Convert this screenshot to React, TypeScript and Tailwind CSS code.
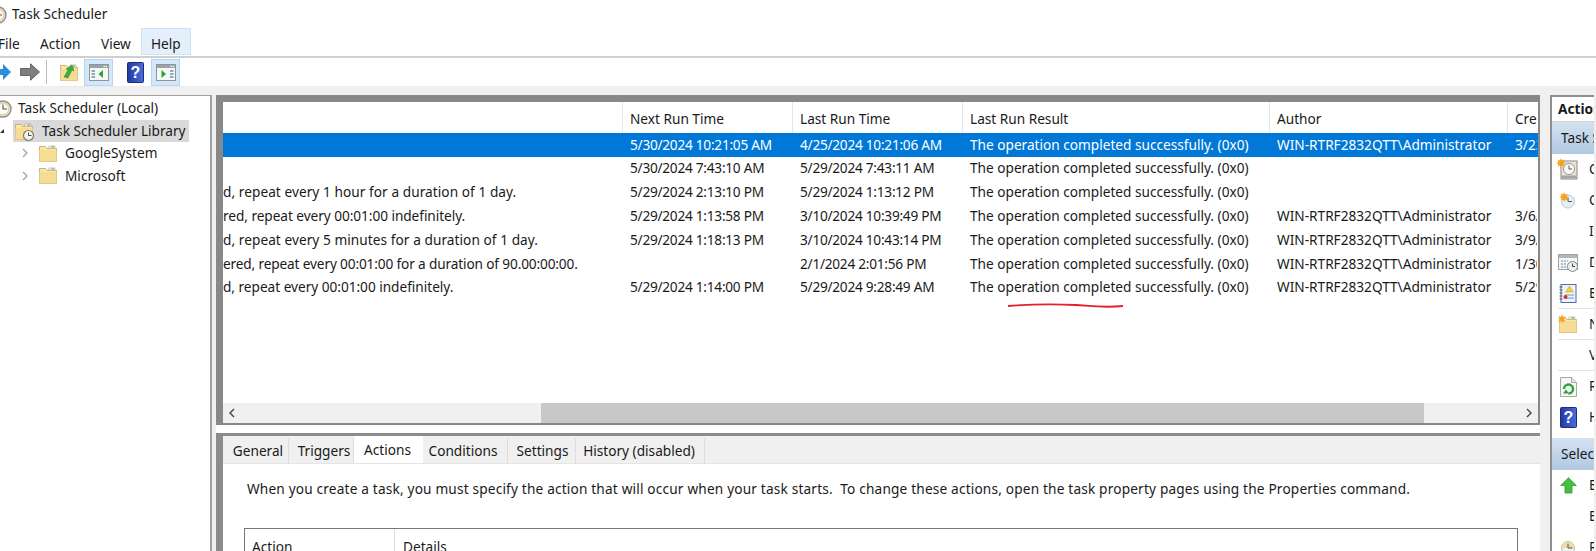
import type { ReactNode } from "react";

const font = { fontFamily: '"Noto Sans", sans-serif' };

function ClockIcon({ size = 18 }: { size?: number }) {
  return (
    <svg width={size} height={size} viewBox="0 0 18 18" className="shrink-0">
      <circle cx="9" cy="9" r="8" fill="#e6dcc4" stroke="#8f8f84" strokeWidth="1.4" />
      <circle cx="9" cy="9" r="5.6" fill="#fbfbf4" stroke="#c9c2a8" strokeWidth=".6" />
      <path d="M9 4.6V9h4" fill="none" stroke="#55554f" strokeWidth="1.1" />
    </svg>
  );
}

function Folder({ clock = false, star = false, arrow = false, w = 18, h = 17 }: { clock?: boolean; star?: boolean; arrow?: boolean; w?: number; h?: number }) {
  return (
    <svg width={w} height={h} viewBox="0 0 18 17" className="shrink-0" style={{ overflow: "visible" }}>
      <path d="M.5 1.5h6l1.5 2h9.5v13H.5z" fill="#f9e6a9" stroke="#c9ad6a" strokeWidth=".9" />
      <path d="M.5 5h17v11.5H.5z" fill="#f6dd96" />
      <rect x="10" y="1" width="6" height="2.6" fill="#fdf8e4" stroke="#b9a46a" strokeWidth=".6" />
      <rect x="12.5" y="1.4" width="2.4" height="1.4" fill="#6fa4d6" />
      {star && <path d="M3 -2l1 3 3-1-2 3 2 3-3-1-1 3-1-3-3 1 2-3-2-3 3 1z" fill="#f5a31e" />}
      {arrow && <path d="M4 13l4-7-2-1 6-4 2 6-2-1-4 8z" fill="#3cae3c" stroke="#2c8c2c" strokeWidth=".5" />}
      {clock && (
        <g>
          <circle cx="13.5" cy="12.5" r="5" fill="#f4f4ee" stroke="#7d7d76" strokeWidth="1.2" />
          <path d="M13.5 9.5v3h3" fill="none" stroke="#33332f" strokeWidth=".9" />
        </g>
      )}
    </svg>
  );
}

function HelpBook() {
  return (
    <svg width="17" height="21" viewBox="0 0 17 21" className="shrink-0">
      <defs>
        <linearGradient id="hb" x1="0" x2="1" y1="0" y2="0">
          <stop offset="0" stopColor="#2438a0" />
          <stop offset="1" stopColor="#4a6ce0" />
        </linearGradient>
      </defs>
      <rect x=".5" y=".5" width="16" height="20" rx="1" fill="url(#hb)" stroke="#1d2c7a" />
      <text x="8.5" y="16" textAnchor="middle" fontSize="16" fontWeight="700" fill="#fff" fontFamily="Liberation Sans">?</text>
    </svg>
  );
}

function Pane({ right }: { right?: boolean }) {
  return (
    <svg width="20" height="17" viewBox="0 0 20 17" className="shrink-0">
      <rect x=".5" y=".5" width="19" height="16" fill="#f6f8f8" stroke="#8b9698" />
      <rect x="1" y="1" width="18" height="3" fill="#9aa4a6" />
      <rect x="14.5" y="1.8" width="1.3" height="1.3" fill="#fff" />
      <rect x="16.7" y="1.8" width="1.3" height="1.3" fill="#fff" />
      <path d={right ? "M14 7h3.5M14 10h3.5M14 13h3.5" : "M2.5 7H6M2.5 10H6M2.5 13H6"} stroke="#6d8fb0" strokeWidth="1.6" />
      {right ? <path d="M5.5 6l4.5 4-4.5 4z" fill="#2aa52a" /> : <path d="M14 6l-4.5 4 4.5 4z" fill="#2aa52a" />}
    </svg>
  );
}

function CreateBasic() {
  return (
    <svg width="19" height="19" viewBox="0 0 19 19" style={{ overflow: "visible" }}>
      <rect x="2" y="1" width="16" height="18" fill="#e9e2d6" stroke="#8f8a82" />
      <rect x="2.5" y="15.5" width="15" height="3" fill="#a9a49c" />
      <circle cx="10" cy="9" r="5.5" fill="#fbfbf6" stroke="#8f9aa0" />
      <path d="M10 5.5V9h3" fill="none" stroke="#555" />
      <path d="M2 -2l1 2.5 2.5-1-1 2.5 2.5 1-2.5 1 1 2.5-2.5-1-1 2.5-1-2.5-2.5 1 1-2.5-2.5-1 2.5-1-1-2.5 2.5 1z" fill="#f5a31e" />
    </svg>
  );
}

function CreateTask() {
  return (
    <svg width="16" height="17" viewBox="0 0 16 17" style={{ overflow: "visible" }}>
      <circle cx="8" cy="9.5" r="6.5" fill="#e9eef2" stroke="#b6c6d4" />
      <path d="M8 5.5v4h4" fill="none" stroke="#555" />
      <path d="M4 0l1 2.5 2.5-1-1 2.5 2.5 1-2.5 1 1 2.5-2.5-1-1 2.5-1-2.5-2.5 1 1-2.5-2.5-1 2.5-1-1-2.5 2.5 1z" fill="#f5a31e" />
    </svg>
  );
}

function RunClock() {
  return (
    <svg width="16" height="16" viewBox="0 0 16 16">
      <circle cx="8" cy="8" r="6.5" fill="#eef1f3" stroke="#aebcc8" />
      <path d="M1.5 8a6.5 6.5 0 0 1 13 0z" fill="#f0dca0" />
      <path d="M8 3.5V8h4.5" fill="none" stroke="#555" />
    </svg>
  );
}

function Display() {
  return (
    <svg width="20" height="18" viewBox="0 0 20 18">
      <rect x=".5" y=".5" width="19" height="15" fill="#f4f6f8" stroke="#9aa4ac" />
      <rect x="1" y="1" width="18" height="3" fill="#aeb8c0" />
      <path d="M3 7h7M3 10h6M3 13h5" stroke="#9ab0c4" strokeWidth="1.4" strokeDasharray="2 1" />
      <circle cx="14.5" cy="12.5" r="5" fill="#eeeeea" stroke="#7d8a90" />
      <path d="M14.5 9.5v3h2.5" fill="none" stroke="#444" />
    </svg>
  );
}

function Notebook() {
  return (
    <svg width="18" height="19" viewBox="0 0 18 19">
      <rect x="2" y=".5" width="15" height="18" fill="#eef3fb" stroke="#4a6ea8" />
      <path d="M.5 3h3M.5 6h3M.5 9h3M.5 12h3M.5 15h3" stroke="#555" strokeWidth="1.1" />
      <path d="M10.5 2l4 6h-8z" fill="#f5cf3a" stroke="#c99f1e" strokeWidth=".5" />
      <path d="M6 11h9M6 14h9" stroke="#7a93bb" />
      <circle cx="6.5" cy="13" r="2" fill="#d0342c" />
    </svg>
  );
}

function Refresh() {
  return (
    <svg width="17" height="20" viewBox="0 0 17 20">
      <path d="M.5.5h11l5 5v14H.5z" fill="#f6f7f4" stroke="#a7aaa4" />
      <path d="M11.5.5v5h5" fill="#e4e6e0" stroke="#a7aaa4" />
      <path d="M4 12a4.5 4.5 0 1 1 4.5 4.5" fill="none" stroke="#2fa33a" strokeWidth="2.4" />
      <path d="M3 16.5h6l-3-4z" fill="#2fa33a" />
    </svg>
  );
}

function UpArrow() {
  return (
    <svg width="17" height="17" viewBox="0 0 17 17">
      <path d="M8.5 .8L16.3 8.5H12V16H5V8.5H.7z" fill="#43c043" stroke="#2a9a2a" strokeWidth=".8" />
    </svg>
  );
}

const rows = [
  ["", "5/30/2024 10:21:05 AM", "4/25/2024 10:21:06 AM", "WIN-RTRF2832QTT\\Administrator", "3/23/2024"],
  ["", "5/30/2024 7:43:10 AM", "5/29/2024 7:43:11 AM", "", ""],
  ["d, repeat every 1 hour for a duration of 1 day.", "5/29/2024 2:13:10 PM", "5/29/2024 1:13:12 PM", "", ""],
  ["red, repeat every 00:01:00 indefinitely.", "5/29/2024 1:13:58 PM", "3/10/2024 10:39:49 PM", "WIN-RTRF2832QTT\\Administrator", "3/6/2024"],
  ["d, repeat every 5 minutes for a duration of 1 day.", "5/29/2024 1:18:13 PM", "3/10/2024 10:43:14 PM", "WIN-RTRF2832QTT\\Administrator", "3/9/2024"],
  ["ered, repeat every 00:01:00 for a duration of 90.00:00:00.", "", "2/1/2024 2:01:56 PM", "WIN-RTRF2832QTT\\Administrator", "1/30/2024"],
  ["d, repeat every 00:01:00 indefinitely.", "5/29/2024 1:14:00 PM", "5/29/2024 9:28:49 AM", "WIN-RTRF2832QTT\\Administrator", "5/29/2024"],
];

const colW = [399, 170, 170, 307, 238, 30];
const firstTrack = ["", "", "tracking-[0.06px]", "tracking-[-0.05px]", "tracking-[0.06px]", "tracking-[-0.14px]", "tracking-[-0.02px]"];

function Row({ r, selected, idx }: { r: string[]; selected?: boolean; idx: number }) {
  const cells = [r[0], r[1], r[2], "The operation completed successfully. (0x0)", r[3], r[4]];
  return (
    <div className={`flex h-[23.8px] items-center ${selected ? "bg-[#0078d7] text-white" : ""}`}>
      {cells.map((c, i) => (
        <div
          key={i}
          style={{ width: colW[i] }}
          className={
            i === 0
              ? `shrink-0 overflow-hidden whitespace-nowrap ${firstTrack[idx]}`
              : i === 1 || i === 2
                ? "shrink-0 overflow-hidden whitespace-nowrap pl-2 tracking-[-0.25px]"
                : "shrink-0 overflow-hidden whitespace-nowrap pl-2"
          }
        >
          {c}
        </div>
      ))}
    </div>
  );
}

function Item({ icon, t, sep }: { icon?: ReactNode; t: string; sep?: boolean }) {
  return (
    <div className={`relative flex h-[31px] shrink-0 items-center ml-[6px] ${sep ? "border-b border-[#e2e2e2]" : ""}`}>
      <div className="flex w-[20px] justify-center shrink-0">{icon}</div>
      <span className="ml-[11px]">{t}</span>
    </div>
  );
}

function ActionBand({ t }: { t: string }) {
  return (
    <div className="h-[32px] shrink-0 flex items-center pl-[9px] whitespace-nowrap bg-gradient-to-b from-[#d3e2f1] to-[#b1c9e2]">{t}</div>
  );
}

function ActionsPane() {
  return (
    <div className="w-[44px] shrink-0 h-full overflow-hidden border-l-2 border-t-2 border-[#8f8f8f] ml-[10px] bg-white flex flex-col">
      <div className="h-[25px] shrink-0 flex items-center pl-[6px] font-bold whitespace-nowrap border-b border-[#d0d0d0]">Actions</div>
      <ActionBand t="Task Scheduler" />
      <Item t="C" icon={<CreateBasic />} />
      <Item t="C" icon={<CreateTask />} />
      <Item t="I" />
      <Item t="D" icon={<Display />} />
      <Item t="E" sep icon={<Notebook />} />
      <Item t="N" sep icon={<Folder star w={18} h={17} />} />
      <Item t="V" sep />
      <Item t="R" icon={<Refresh />} />
      <Item t="H" icon={<HelpBook />} />
      <div className="mt-[5px]"><ActionBand t="Selected" /></div>
      <Item t="E" icon={<UpArrow />} />
      <Item t="E" />
      <Item t="R" icon={<RunClock />} />
    </div>
  );
}

function Chevron({ dir }: { dir: "l" | "r" | "tree" }) {
  const d = dir === "l" ? "M6 1L2 5l4 4" : "M2 1l4 4-4 4";
  return (
    <svg width="8" height="10" viewBox="0 0 8 10" className="shrink-0">
      <path d={d} fill="none" stroke={dir === "tree" ? "#a6a6a6" : "#444"} strokeWidth="1.4" />
    </svg>
  );
}

export default function App() {
  const tabs: [string, number, string][] = [
    ["General", 65, "pl-[4px]"],
    ["Triggers", 65, "pl-[6px]"],
    ["Actions", 69, "pr-[2px]"],
    ["Conditions", 85, "pr-[4px]"],
    ["Settings", 68, "pl-[2px]"],
    ["History (disabled)", 129, "pr-[2px]"],
  ];
  const heads: [string, number][] = [["Next Run Time", 170], ["Last Run Time", 170], ["Last Run Result", 307], ["Author", 238], ["Created", 30]];
  return (
    <div style={font} className="relative w-[1596px] h-[551px] overflow-hidden bg-white text-[13.65px] text-[#1a1a1a] flex flex-col">
      <div className="h-[28px] flex items-center shrink-0 -ml-[11px] pt-[1px]">
        <ClockIcon size={18} />
        <span className="ml-[5px]">Task Scheduler</span>
      </div>
      <div className="h-[30px] flex items-stretch shrink-0 border-b-2 border-[#cfcfcf] pb-[1px]">
        <span className="flex items-center w-[30px] -ml-[2px] pt-[6px] shrink-0">File</span>
        <span className="flex items-center w-[63px] pl-[10px] pt-[6px] shrink-0 ml-[2px] -mr-[2px]">Action</span>
        <span className="flex items-center w-[50px] pl-[10px] pt-[6px] shrink-0">View</span>
        <span className="flex items-center w-[50px] pl-[9px] pt-[6px] bg-[#e3f0fb] border border-[#cde4f7] shrink-0">Help</span>
      </div>
      <div className="h-[28px] flex items-center shrink-0 bg-white">
        <svg width="12" height="18" viewBox="0 0 12 18" className="shrink-0"><path d="M-8 6H4V1l8 8-8 8v-5H-8z" transform="translate(-1 0) scale(1 1)" fill="#2b8fe0" /></svg>
        <svg width="20" height="18" viewBox="0 0 20 18" className="ml-[8px] shrink-0"><path d="M.5 5.5h10V.8L19.5 9l-9 8.2v-4.7H.5z" fill="#7e7e7e" stroke="#666" /></svg>
        <div className="w-px h-[24px] bg-[#bdbdbd] ml-[6px] shrink-0" />
        <div className="ml-[13px]"><Folder arrow /></div>
        <div className="ml-[6px] w-[29px] h-[27px] bg-[#d4e8fa] border border-[#b5d6f2] flex items-center justify-center shrink-0"><Pane /></div>
        <div className="ml-[14px]"><HelpBook /></div>
        <div className="ml-[7px] w-[29px] h-[27px] bg-[#d4e8fa] border border-[#b5d6f2] flex items-center justify-center shrink-0"><Pane right /></div>
      </div>
      <div className="flex-1 flex min-h-0 bg-[#f0f0f0] pt-[8px] border-t border-[#ececec]">
        <div className="w-[212px] bg-white border-t border-r-2 border-[#a0a0a0] shrink-0 pt-[1px]">
          <div className="h-[23px] flex items-center -ml-[6px]"><ClockIcon size={18} /><span className="ml-[6px]">Task Scheduler (Local)</span></div>
          <div className="h-[22px] flex items-center">
            <svg width="13" height="10" viewBox="0 0 13 10" className="shrink-0"><path d="M0 7h4V3z" fill="#333" /></svg>
            <div className="flex items-center h-[22px] bg-[#d9d9d9] w-[176px]">
              <div className="ml-[2px]"><Folder clock /></div>
              <span className="ml-[9px] whitespace-nowrap">Task Scheduler Library</span>
            </div>
          </div>
          {["GoogleSystem", "Microsoft"].map((t) => (
            <div key={t} className="h-[22.5px] flex items-center pl-[21px]">
              <Chevron dir="tree" />
              <div className="ml-[10px]"><Folder /></div>
              <span className="ml-[8px]">{t}</span>
            </div>
          ))}
        </div>
        <div className="ml-[4px] w-[1324px] shrink-0 flex flex-col h-full bg-white">
          <div className="h-[330px] border-2 border-l-[7px] border-t-[7px] border-[#888888] bg-white flex flex-col overflow-hidden">
            <div className="h-[31px] shrink-0 flex">
              <div className="w-[399px] shrink-0 h-full" />
              {heads.map(([t, w]) => (
                <div key={t} style={{ width: w }} className="h-full shrink-0 border-l border-[#e5e5e5] pl-[7px] pt-[4px] flex items-center whitespace-nowrap overflow-hidden">{t}</div>
              ))}
            </div>
            <div className="flex-1 overflow-hidden">
              {rows.map((r, i) => <Row key={i} idx={i} r={r} selected={i === 0} />)}
            </div>
            <div className="h-[20px] shrink-0 bg-[#f0f0f0] flex items-center">
              <div className="w-[318px] pl-[5px] shrink-0"><Chevron dir="l" /></div>
              <div className="w-[883px] h-full bg-[#c8c8c8] shrink-0" />
              <div className="ml-auto pr-[5px]"><Chevron dir="r" /></div>
            </div>
          </div>
          <div className="flex-1 mt-[8px] border-t-[3px] border-l-[7px] border-[#8c8c8c] bg-[#f0f0f0] flex flex-col overflow-hidden">
            <div className="h-[27px] flex items-end pl-[1px] shrink-0 pt-[2px]">
              {tabs.map(([t, w, p]) => (
                <div key={t} style={{ width: w }} className={t === "Actions" ? `h-[27px] bg-white flex items-center justify-center pt-[1px] shrink-0 ${p}` : `h-[25px] pt-[1px] bg-[#f0f0f0] border-r border-[#dcdcdc] flex items-center justify-center shrink-0 ${p}`}>{t}</div>
              ))}
            </div>
            <div className="flex-1 bg-white pl-[24px] pt-[15px] pr-[24px] border-t border-[#e5e5e5]">
              <div className="whitespace-pre tracking-[0.18px]">When you create a task, you must specify the action that will occur when your task starts.  To change these actions, open the task property pages using the Properties command.</div>
              <div className="mt-[29px] -ml-[3px] w-[1274px] border border-[#777] flex h-[40px]">
                <div className="w-[150px] pl-[7px] border-r border-[#ddd] pt-[8px]">Action</div>
                <div className="pl-[8px] pt-[8px]">Details</div>
              </div>
            </div>
          </div>
        </div>
        <ActionsPane />
      </div>
      <svg className="absolute left-[1005px] top-[300px]" width="120" height="10" viewBox="0 0 120 10">
        <path d="M3 6c25-2 48-2 68-1 15 1 28 3 47 1" fill="none" stroke="#e6202a" strokeWidth="1.8" />
      </svg>
    </div>
  );
}
